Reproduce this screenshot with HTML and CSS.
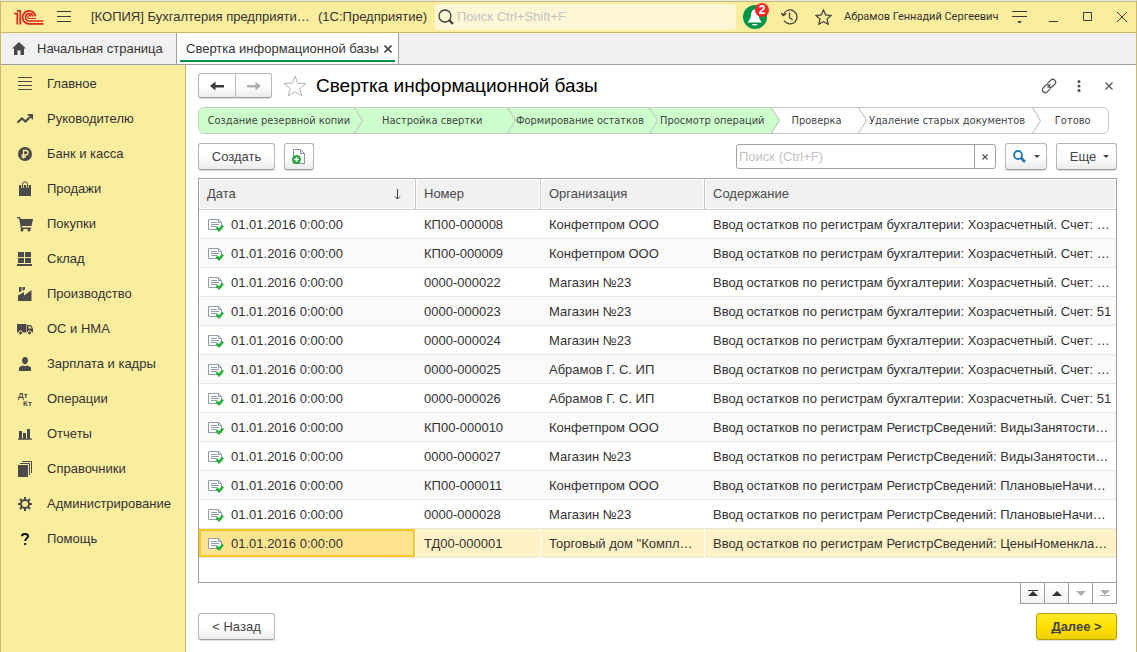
FILE: index.html
```html
<!DOCTYPE html>
<html lang="ru">
<head>
    <meta charset="UTF-8">
    <meta name="viewport" content="width=device-width, initial-scale=1.0">
    <title>Свертка информационной базы</title>
    <link rel="stylesheet" href="styles.css">
</head>
<body>
    <svg class="sprite" aria-hidden="true">
        <symbol id="doc" viewBox="0 0 16 14">
            <path d="M.5 1.5h10l3 3v7H.5z" fill="#fff" stroke="#8f9cab"/>
            <path d="M10.5 1.5v3h3" fill="none" stroke="#8f9cab"/>
            <path d="M3 4.5h6M3 6.5h8M3 8.500h6" stroke="#8f9cab"/>
            <path d="M8.500 9.500l2.500 2.500 4-4.500" fill="none" stroke="#27b03a" stroke-width="2.600"/>
        </symbol>
        <symbol id="chevron" viewBox="0 0 11 27">
            <path class="chevron-fill" d="M0 1C2 1 2.500 2 3 3l6.500 10.500L3 24c-.5 1-1 2-3 2z"/>
            <path d="M0 .5c2 0 2.500 1.500 3 2.500l6.500 10.500L3 24c-.5 1-1 2.500-3 2.500" fill="none" stroke="#c8c8c8" stroke-width="1.200"/>
        </symbol>
    </svg>

    <!-- Заголовок окна -->
    <header class="titlebar">
        <svg class="logo" width="30" height="17" viewBox="0 0 30 17" fill="none" stroke="#e0231c">
            <path d="M0 4.500h3.300V15.500M3 1.800h3.300V15.500" stroke-width="1.700"/>
            <path d="M21.500 7.500A6.500 6.500 0 1 0 15.500 14.800H29.500" stroke-width="1.700"/>
            <path d="M18.900 7.500A3.700 3.700 0 1 0 15.500 12H29.500" stroke-width="1.600"/>
            <path d="M16.800 7.500A1.500 1.500 0 1 0 15.500 9.500H22" stroke-width="1.200"/>
        </svg>
        <button class="icon-btn menu-btn" aria-label="Меню">
            <svg width="14" height="12" stroke="#3c3c3c"><path d="M0 .5h14M0 5.500h14M0 10.500h14"/></svg>
        </button>
        <span class="app-name">[КОПИЯ] Бухгалтерия предприяти…</span>
        <span class="app-platform">(1С:Предприятие)</span>
        <label class="global-search">
            <svg width="16" height="16" viewBox="0 0 16 16" fill="none" stroke="#3c3c3c">
                <circle cx="7" cy="7" r="6" stroke-width="1.300"/>
                <path d="M11.200 11.200l3.800 3.800" stroke-width="2.200"/>
            </svg>
            <input type="text" placeholder="Поиск Ctrl+Shift+F" aria-label="Поиск">
        </label>
        <button class="icon-btn bell" aria-label="Уведомления">
            <svg width="24" height="24" viewBox="0 0 24 24">
                <circle cx="12" cy="12" r="12" fill="#009646"/>
                <path d="M11.500 4.500c-2.400.3-3.200 2.800-3.500 5.500-.4 3.200-1.200 5-3.500 7.500h14.500c-2.200-2.500-3-4.300-3.400-7.500-.4-3-1.700-5.700-4.100-5.500zM9 19h5.500c-.5 2-5 2-5.500 0z" fill="#fff"/>
            </svg>
            <span class="badge">2</span>
        </button>
        <button class="icon-btn history" aria-label="История">
            <svg width="17" height="16" viewBox="0 0 17 16" fill="none" stroke="#3c3c3c" stroke-width="1.200">
                <path d="M2.300 6A7 7 0 1 1 3 11.500"/>
                <path d="M0 4l2.300 2.700L5.300 4.500M8.500 3.500v5l3 2.500"/>
            </svg>
        </button>
        <button class="icon-btn favorites" aria-label="Избранное">
            <svg width="17" height="16" viewBox="0 0 17 16" fill="none" stroke="#3c3c3c" stroke-width="1.200">
                <path d="M8.500 1l2.200 4.900 5.300.6-4 3.600 1.200 5.200-4.700-2.700-4.700 2.700L5 10.100 1 6.500l5.300-.6z"/>
            </svg>
        </button>
        <span class="user">Абрамов Геннадий Сергеевич</span>
        <button class="icon-btn settings" aria-label="Настройки">
            <svg width="15" height="14" stroke="#3c3c3c"><path d="M0 1.500h15M0 6.500h15"/><path d="M5 11h5l-2.500 2.500z" fill="#3c3c3c" stroke="none"/></svg>
        </button>
        <div class="window-buttons">
            <button class="icon-btn" aria-label="Свернуть"><svg width="10" height="10" stroke="#3c3c3c"><path d="M0 9.500h9"/></svg></button>
            <button class="icon-btn" aria-label="Развернуть"><svg width="10" height="10" stroke="#3c3c3c" fill="none"><path d="M.5.5h8v8h-8z"/></svg></button>
            <button class="icon-btn" aria-label="Закрыть"><svg width="10" height="10" stroke="#3c3c3c"><path d="M0 0l10 10M10 0L0 10"/></svg></button>
        </div>
    </header>

    <nav class="tabs">
        <a class="tab home" href="#">
            <svg width="14" height="13" viewBox="0 0 14 13" fill="#4a4a4a"><path d="M7 0l7 6.500h-2V13H8.500V8.500h-3V13H2V6.500H0z"/></svg>
            Начальная страница
        </a>
        <div class="tab active">
            <a href="#">Свертка информационной базы</a>
            <button class="icon-btn" aria-label="Закрыть вкладку"><svg width="8" height="8" stroke="#4a4a4a" stroke-width="1.700"><path d="M.5.5l7 7M7.500.5l-7 7"/></svg></button>
        </div>
    </nav>

    <div class="workspace">
        <nav class="sidebar">
            <a href="#"><svg viewBox="0 0 16 16"><path d="M1 1.500h14M1 5.500h14M1 9.500h14M1 13.500h14" stroke="#4a4a4a"/></svg>Главное</a>
            <a href="#"><svg viewBox="0 0 16 16"><path d="M.5 11.500l4.500-4 3.500 3L13 6" fill="none" stroke="#4a4a4a" stroke-width="2.200"/><path d="M10 3h6v6z"/></svg>Руководителю</a>
            <a href="#"><svg viewBox="0 0 16 16"><circle cx="8" cy="8" r="7"/><path d="M6.500 12.500v-8h2.300a2.200 2.200 0 0 1 0 4.500H4.500M4.500 11H9" fill="none" stroke="#fbed9e" stroke-width="1.300"/></svg>Банк и касса</a>
            <a href="#"><svg viewBox="0 0 16 16"><path d="M2 4h12v11H2z"/><path d="M5.500 7V3.500a2.500 2.500 0 0 1 5 0V7" fill="none" stroke="#fbed9e" stroke-width="2.600"/><path d="M5.500 7V3.200a2.500 2.500 0 0 1 5 0V7" fill="none" stroke="#4a4a4a"/></svg>Продажи</a>
            <a href="#"><svg viewBox="0 0 16 16"><path d="M0 1h3l.6 2H16l-1.500 7H4.800l.4 1.500H14V13H4L2 2.200H0z"/><circle cx="5" cy="14" r="1.500"/><circle cx="12" cy="14" r="1.500"/></svg>Покупки</a>
            <a href="#"><svg viewBox="0 0 16 16"><path d="M1 1h6v5H1zM8 1h6v5H8zM1 7h6v5H1zM8 7h6v5H8zM0 13h15v2H0z"/></svg>Склад</a>
            <a href="#"><svg viewBox="0 0 16 16"><path d="M1 15V9.500L7 6v3.500L14.500 4v11zM2 1h2.500v4L2 6.500zM5.500 1H8v2.500L5.500 5z"/></svg>Производство</a>
            <a href="#"><svg viewBox="0 0 16 16"><path d="M0 3h9.500v8.500H0z"/><path d="M10 4h4l2 3.500v4h-6z"/><path d="M11.500 5.200h2L14.700 7.500h-3.200z" fill="#fbed9e"/><g stroke="#fbed9e"><circle cx="3.500" cy="12" r="2"/><circle cx="12.500" cy="12" r="2"/></g></svg>ОС и НМА</a>
            <a href="#"><svg viewBox="0 0 16 16"><path d="M8 1c2 0 3 1.300 3 3.300S9.700 8.500 8 8.500 5 6.300 5 4.300 6 1 8 1zM2 15v-2.500C2 10.500 4 10 6 9.500l2 .8 2-.8c2 .5 4 1 4 3V15z"/></svg>Зарплата и кадры</a>
            <a href="#"><svg class="dtkt" viewBox="0 0 16 16"><text x="1" y="7">Дт</text><text x="6" y="15">Кт</text></svg>Операции</a>
            <a href="#"><svg viewBox="0 0 16 16"><path d="M2 5h3v8H2zM6 7h3v6H6zM10 3h3v10h-3zM1 12.500h14v1.300H1z"/></svg>Отчеты</a>
            <a href="#"><svg viewBox="0 0 16 16"><path d="M1 4h10v12H1z"/><path d="M3 2.500h9.500V14M5 .5h9.500V12" fill="none" stroke="#4a4a4a"/></svg>Справочники</a>
            <a href="#"><svg viewBox="0 0 16 16"><circle cx="8" cy="8" r="4" fill="none" stroke="#4a4a4a" stroke-width="2"/><path d="M8 1v3M8 12v3M1 8h3M12 8h3M3 3l2 2M11 11l2 2M13 3l-2 2M5 11l-2 2" stroke="#4a4a4a" stroke-width="2"/></svg>Администрирование</a>
            <a href="#"><svg viewBox="0 0 16 16"><path d="M5 5.300C5 2.300 11 2.300 11 5.300c0 2-2.800 2-2.800 4.700M8.200 12v2" fill="none" stroke="#111" stroke-width="2"/></svg>Помощь</a>
        </nav>

        <main class="content">
            <div class="form-title">
                <div class="nav-buttons">
                    <button class="btn" aria-label="Назад"><svg width="14" height="10" fill="#3c3c3c"><path d="M0 5l5.500-4.500V4H14v2.400H5.500v3.100z"/></svg></button>
                    <button class="btn" aria-label="Вперед"><svg width="14" height="10" fill="#b0b0b0"><path d="M14 5L8.500.5V4H0v2.400h8.500v3.100z"/></svg></button>
                </div>
                <button class="icon-btn star" aria-label="В избранное">
                    <svg width="24" height="22" viewBox="0 0 24 22" fill="none" stroke="#b4b4b4"><path d="M12 1l2.900 7.300 8 .3-6.200 4.900 2.200 7.500-6.900-4.300L5.100 21l2.200-7.500L1.100 8.600l8-.3z"/></svg>
                </button>
                <h1>Свертка информационной базы</h1>
                <div class="form-tools">
                    <button class="icon-btn" aria-label="Ссылка">
                        <svg width="16" height="16" viewBox="0 0 16 16" fill="none" stroke="#505050" stroke-width="1.200"><path d="M6.300 5.700L9.800 2.200c2.600-2.600 6.600 1.400 4 4L11.500 8.500c-1 1-2.300 1.200-3.500.6M9.700 10.300L6.200 13.800c-2.600 2.600-6.600-1.400-4-4L4.500 7.500c1-1 2.300-1.200 3.500-.6M6.500 9.500l3-3"/></svg>
                    </button>
                    <button class="icon-btn" aria-label="Еще действия"><svg width="4" height="12" fill="#505050"><circle cx="2" cy="1.500" r="1.500"/><circle cx="2" cy="6" r="1.500"/><circle cx="2" cy="10.500" r="1.500"/></svg></button>
                    <button class="icon-btn" aria-label="Закрыть"><svg width="8" height="8" stroke="#505050" stroke-width="1.200"><path d="M.5.5l7 7M7.500.5l-7 7"/></svg></button>
                </div>
            </div>

            <ol class="steps">
                <li class="step-1 done">Создание резервной копии<svg><use href="#chevron"/></svg></li>
                <li class="step-2 done">Настройка свертки<svg><use href="#chevron"/></svg></li>
                <li class="step-3 done">Формирование остатков<svg><use href="#chevron"/></svg></li>
                <li class="step-4 done">Просмотр операций<svg><use href="#chevron"/></svg></li>
                <li class="step-5">Проверка<svg><use href="#chevron"/></svg></li>
                <li class="step-6">Удаление старых документов<svg><use href="#chevron"/></svg></li>
                <li class="step-7">Готово</li>
            </ol>

            <div class="toolbar">
                <button class="btn create">Создать</button>
                <button class="btn copy" aria-label="Скопировать">
                    <svg width="14" height="16" viewBox="0 0 14 16"><path d="M1.500.5h7l4 4v10h-11z" fill="#fff" stroke="#8593a3"/><path d="M8.500.5v4h4" fill="none" stroke="#8593a3"/><circle cx="4.500" cy="10.500" r="4.500" fill="#27a53a"/><path d="M4.500 8v5M2 10.500h5" stroke="#fff" stroke-width="1.400"/></svg>
                </button>
                <div class="search">
                    <input type="text" placeholder="Поиск (Ctrl+F)" aria-label="Поиск в списке">
                    <button aria-label="Очистить"><svg width="6" height="6" stroke="#505050" stroke-width="1.200"><path d="M.5.5l5 5M5.500.5l-5 5"/></svg></button>
                </div>
                <button class="btn find" aria-label="Найти">
                    <svg width="13" height="13" fill="none" stroke="#2079ae"><circle cx="5" cy="5" r="4" stroke-width="1.800"/><path d="M8 8l4 4" stroke-width="2.600"/></svg>
                    <svg class="caret" width="6" height="3"><path d="M0 0h6L3 3z"/></svg>
                </button>
                <button class="btn more">Еще<svg class="caret" width="6" height="3"><path d="M0 0h6L3 3z"/></svg></button>
            </div>

            <div class="list">
                <table>
                    <colgroup>
                        <col class="col-date">
                        <col class="col-number">
                        <col class="col-org">
                        <col>
                    </colgroup>
                    <thead>
                        <tr>
                            <th><div class="sorted">Дата<svg width="7" height="11" fill="none" stroke="#3c3c3c"><path d="M3.500 0v10M1 7.500L3.500 10 6 7.500"/></svg></div></th>
                            <th>Номер</th>
                            <th>Организация</th>
                            <th>Содержание</th>
                        </tr>
                    </thead>
                    <tbody>
                        <tr><td><svg class="doc"><use href="#doc"/></svg>01.01.2016 0:00:00</td><td>КП00-000008</td><td>Конфетпром ООО</td><td>Ввод остатков по регистрам бухгалтерии: Хозрасчетный. Счет: …</td></tr>
                        <tr><td><svg class="doc"><use href="#doc"/></svg>01.01.2016 0:00:00</td><td>КП00-000009</td><td>Конфетпром ООО</td><td>Ввод остатков по регистрам бухгалтерии: Хозрасчетный. Счет: …</td></tr>
                        <tr><td><svg class="doc"><use href="#doc"/></svg>01.01.2016 0:00:00</td><td>0000-000022</td><td>Магазин №23</td><td>Ввод остатков по регистрам бухгалтерии: Хозрасчетный. Счет: …</td></tr>
                        <tr><td><svg class="doc"><use href="#doc"/></svg>01.01.2016 0:00:00</td><td>0000-000023</td><td>Магазин №23</td><td>Ввод остатков по регистрам бухгалтерии: Хозрасчетный. Счет: 51</td></tr>
                        <tr><td><svg class="doc"><use href="#doc"/></svg>01.01.2016 0:00:00</td><td>0000-000024</td><td>Магазин №23</td><td>Ввод остатков по регистрам бухгалтерии: Хозрасчетный. Счет: …</td></tr>
                        <tr><td><svg class="doc"><use href="#doc"/></svg>01.01.2016 0:00:00</td><td>0000-000025</td><td>Абрамов Г. С. ИП</td><td>Ввод остатков по регистрам бухгалтерии: Хозрасчетный. Счет: …</td></tr>
                        <tr><td><svg class="doc"><use href="#doc"/></svg>01.01.2016 0:00:00</td><td>0000-000026</td><td>Абрамов Г. С. ИП</td><td>Ввод остатков по регистрам бухгалтерии: Хозрасчетный. Счет: 51</td></tr>
                        <tr><td><svg class="doc"><use href="#doc"/></svg>01.01.2016 0:00:00</td><td>КП00-000010</td><td>Конфетпром ООО</td><td>Ввод остатков по регистрам РегистрСведений: ВидыЗанятости…</td></tr>
                        <tr><td><svg class="doc"><use href="#doc"/></svg>01.01.2016 0:00:00</td><td>0000-000027</td><td>Магазин №23</td><td>Ввод остатков по регистрам РегистрСведений: ВидыЗанятости…</td></tr>
                        <tr><td><svg class="doc"><use href="#doc"/></svg>01.01.2016 0:00:00</td><td>КП00-000011</td><td>Конфетпром ООО</td><td>Ввод остатков по регистрам РегистрСведений: ПлановыеНачи…</td></tr>
                        <tr><td><svg class="doc"><use href="#doc"/></svg>01.01.2016 0:00:00</td><td>0000-000028</td><td>Магазин №23</td><td>Ввод остатков по регистрам РегистрСведений: ПлановыеНачи…</td></tr>
                        <tr class="selected"><td><svg class="doc"><use href="#doc"/></svg>01.01.2016 0:00:00</td><td>ТД00-000001</td><td>Торговый дом "Компл…</td><td>Ввод остатков по регистрам РегистрСведений: ЦеныНоменкла…</td></tr>
                    </tbody>
                </table>
            </div>

            <div class="pager">
                <button aria-label="В начало"><svg width="10" height="6"><path d="M0 0h10v1H0zM5 1l5 5H0z"/></svg></button>
                <button aria-label="Вверх"><svg width="10" height="5"><path d="M5 0l5 5H0z"/></svg></button>
                <button aria-label="Вниз" disabled><svg width="10" height="5"><path d="M5 5l5-5H0z"/></svg></button>
                <button aria-label="В конец" disabled><svg width="10" height="6"><path d="M0 5h10v1H0zM5 5l5-5H0z"/></svg></button>
            </div>

            <div class="footer">
                <button class="btn back">&lt; Назад</button>
                <button class="btn next"><span><u>Д</u>алее &gt;</span></button>
            </div>
        </main>
    </div>
</body>
</html>
```

FILE: styles.css
```css
* {
    margin: 0;
    padding: 0;
    box-sizing: border-box;
}

body {
    display: flex;
    flex-direction: column;
    min-height: 100vh;
    font-family: "Liberation Sans", Arial, sans-serif;
    font-size: 13px;
    line-height: 16px;
    color: #333;
    background: #fff;
    border: 1px solid #c9b869;
    border-top-color: #e8e8e8;
    border-bottom: 0;
}

a {
    color: inherit;
    text-decoration: none;
}

button,
input {
    font: inherit;
    color: inherit;
}

svg {
    display: block;
    flex: none;
}

.sprite {
    position: absolute;
    width: 0;
    height: 0;
}

.icon-btn {
    display: flex;
    flex: none;
    align-items: center;
    justify-content: center;
    border: 0;
    background: none;
}

/* Заголовок окна */

.titlebar {
    display: flex;
    align-items: center;
    height: 32px;
    padding: 0 9px 0 13px;
    background: #fbed9e;
    border-top: 1px solid #c9b869;
    border-bottom: 1px solid #c9b869;
}

.menu-btn {
    margin: 0 20px 0 13px;
}

.app-name,
.app-platform,
.user {
    white-space: nowrap;
}

.app-name {
    width: 217px;
}

.app-platform {
    width: 108px;
    margin: 0 9px 0 10px;
}

.global-search {
    display: flex;
    flex: 1;
    align-items: center;
    gap: 3px;
    height: 26px;
    padding: 0 3px;
    background: #fef6d5;
    border-radius: 3px;
}

.global-search input {
    flex: 1;
    min-width: 0;
    border: 0;
    outline: 0;
    background: none;
}

input::placeholder {
    color: #c3c3c3;
    opacity: 1;
}

.bell {
    position: relative;
    margin-left: 7px;
}

.badge {
    position: absolute;
    top: -2px;
    right: -2px;
    width: 14px;
    height: 14px;
    border-radius: 7px;
    background: #f8242b;
    color: #fff;
    font-size: 12px;
    font-weight: bold;
    line-height: 14px;
    text-align: center;
}

.history {
    margin-left: 14px;
}

.favorites {
    margin: 0 12px 0 17px;
}

.user {
    width: 156px;
    font-family: Roboto, "Liberation Sans", sans-serif;
    font-size: 11px;
}

.settings {
    margin-left: 12px;
}

.window-buttons {
    display: flex;
    gap: 24px;
    margin-left: 22px;
}

/* Вкладки */

.tabs {
    display: flex;
    height: 32px;
    background: #f1f1f1;
    border-bottom: 1px solid #a0a0a0;
}

.tab {
    display: flex;
    align-items: center;
    white-space: nowrap;
}

.home {
    gap: 11px;
    width: 175px;
    padding-left: 11px;
}

.active {
    gap: 5px;
    padding: 0 6px 0 9px;
    background: linear-gradient(#009646, #009646) center bottom 2px / calc(100% - 6px) 2px no-repeat #fff;
    border: 1px solid #a0a0a0;
    border-width: 0 1px;
}

.workspace {
    display: flex;
    flex: 1;
}

/* Разделы */

.sidebar {
    flex: none;
    width: 185px;
    padding-top: 1px;
    background: #fbed9e;
    border-right: 1px solid #c9b869;
}

.sidebar a {
    display: flex;
    align-items: center;
    gap: 14px;
    height: 35px;
    padding-left: 16px;
}

.sidebar svg {
    width: 16px;
    height: 16px;
    fill: #4a4a4a;
}

.dtkt {
    overflow: visible;
    font-size: 8px;
    font-weight: bold;
}

/* Форма */

.content {
    display: flex;
    flex: 1;
    flex-direction: column;
    min-width: 0;
    padding: 8px 19px 12px 12px;
}

.btn {
    display: flex;
    align-items: center;
    justify-content: center;
    height: 27px;
    border: 1px solid #b5b5b5;
    border-bottom-color: #9c9c9c;
    border-radius: 3px;
    background: linear-gradient(#fff 50%, #ececec);
    box-shadow: 0 1px 1px #ddd;
    color: #444;
}

.form-title {
    display: flex;
    align-items: center;
    height: 25px;
}

.nav-buttons {
    display: flex;
}

.nav-buttons .btn {
    width: 38px;
    height: 25px;
    border-radius: 3px 0 0 3px;
}

.nav-buttons .btn + .btn {
    width: 36px;
    border-left: 0;
    border-radius: 0 3px 3px 0;
}

.star {
    margin: 0 9px 0 11px;
}

h1 {
    font-size: 19px;
    font-weight: normal;
    line-height: 24px;
    color: #000;
}

.form-tools {
    display: flex;
    align-items: center;
    gap: 14px;
    margin-left: auto;
}

.form-tools .icon-btn {
    width: 16px;
    height: 16px;
}

.steps {
    display: flex;
    height: 27px;
    margin: 9px 8px 0 0;
    border: 1px solid #c8c8c8;
    border-radius: 6px;
    list-style: none;
    font-family: "DejaVu Sans Condensed", "DejaVu Sans", sans-serif;
    font-size: 11px;
    color: #444;
}

.steps li {
    position: relative;
    display: flex;
    align-items: center;
    justify-content: center;
    padding-left: 6px;
    white-space: nowrap;
}

.steps .done {
    background: #ccffcc;
}

.steps svg {
    position: absolute;
    top: -1px;
    left: 100%;
    z-index: 1;
    width: 11px;
    height: 27px;
    fill: #fff;
}

.steps .done svg {
    fill: #ccffcc;
}

.steps .step-1 {
    border-radius: 5px 0 0 5px;
}

.step-1 { flex: 155 0 0; }
.step-2 { flex: 154 0 0; }
.step-3 { flex: 143 0 0; }
.step-4 { flex: 122 0 0; }
.step-5 { flex: 84 0 0; }
.step-6 { flex: 177 0 0; }
.step-7 { flex: 74 0 0; }

.toolbar {
    display: flex;
    align-items: center;
    margin: 9px 0 8px;
}

.create,
.back {
    width: 77px;
}

.copy {
    width: 30px;
    margin-left: 9px;
}

.search {
    display: flex;
    width: 260px;
    height: 25px;
    margin: 0 9px 0 auto;
    border: 1px solid #a0a0a0;
    border-radius: 3px;
}

.search input {
    flex: 1;
    min-width: 0;
    padding-left: 2px;
    border: 0;
    outline: 0;
    background: none;
}

.search button {
    display: flex;
    align-items: center;
    justify-content: center;
    width: 21px;
    border: 0;
    border-left: 1px solid #a0a0a0;
    background: none;
}

.find {
    gap: 8px;
    width: 42px;
    margin-right: 9px;
}

.more {
    gap: 7px;
    width: 61px;
    padding-left: 6px;
}

.caret {
    fill: #444;
}

/* Список документов */

.list {
    flex: 1;
    border: 1px solid #a0a0a0;
}

table {
    width: 100%;
    table-layout: fixed;
    border-collapse: separate;
    border-spacing: 0;
}

.col-date { width: 217px; }
.col-number { width: 125px; }
.col-org { width: 164px; }

th,
td {
    padding: 0 8px;
    overflow: hidden;
    text-align: left;
    white-space: nowrap;
}

th {
    height: 31px;
    background: #f1f1f1;
    border-right: 1px solid #c8c8c8;
    border-bottom: 1px solid #c8c8c8;
    box-shadow: inset 0 0 0 1px #fff;
    font-weight: normal;
    color: #4a4a4a;
}

th:last-child {
    border-right: 0;
}

.sorted {
    display: flex;
    align-items: center;
    justify-content: space-between;
    padding-right: 6px;
}

td {
    height: 29px;
    padding-top: 2px;
    border-bottom: 1px solid #e6e6e6;
}

tbody tr:nth-child(even) {
    background: #fafafa;
}

.doc {
    display: inline-block;
    width: 16px;
    height: 14px;
    margin: 0 7px 0 1px;
    vertical-align: -3px;
}

tbody .selected td {
    background: #fff2c6;
    border-right: 1px solid #fff;
}

tbody .selected td:first-child {
    background: #fee48f;
    box-shadow: inset 0 0 0 2px #fbc724;
}

tbody .selected td:last-child {
    border-right: 0;
}

.pager {
    display: flex;
    align-self: flex-end;
    border: 1px solid #a0a0a0;
    border-top: 0;
}

.pager button {
    display: flex;
    align-items: center;
    justify-content: center;
    width: 24px;
    height: 20px;
    border: 0;
    border-left: 1px solid #a0a0a0;
    background: linear-gradient(#fff, #f2f2f2);
    fill: #333;
}

.pager button:first-child {
    width: 23px;
    border-left: 0;
}

.pager button:disabled {
    background: #fff;
    fill: #b0b0b0;
}

.footer {
    display: flex;
    justify-content: space-between;
    margin-top: 9px;
}

.next {
    width: 81px;
    border-color: #b5a000;
    background: linear-gradient(#ffea2e, #ffe100 50%, #efd000);
    font-weight: bold;
}

.next u {
    text-decoration-skip-ink: none;
}
```
